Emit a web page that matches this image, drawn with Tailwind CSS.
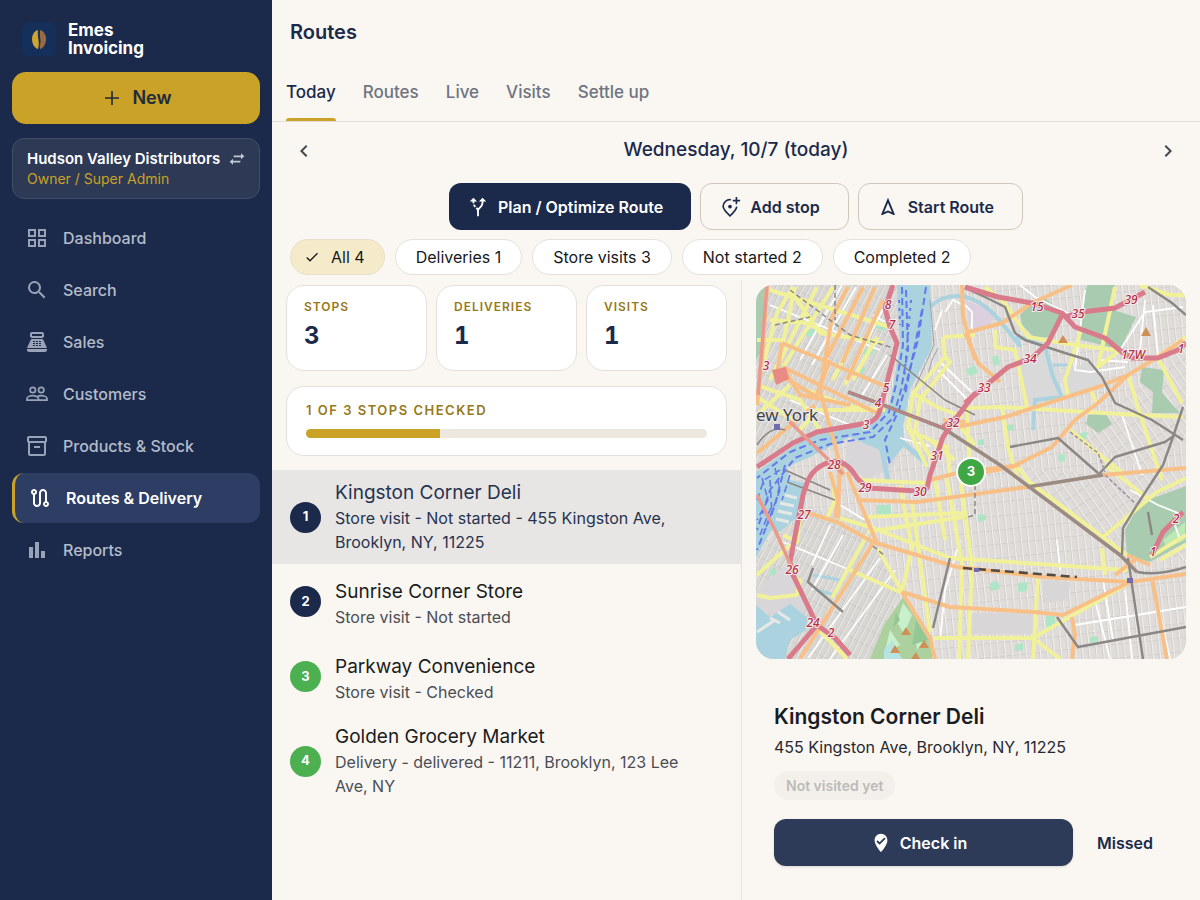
<!DOCTYPE html>
<html lang="en">
<head>
  <meta charset="UTF-8">
  <meta name="viewport" content="width=device-width, initial-scale=1.0">
  <title>Routes - Emes Invoicing</title>
  <script src="https://cdn.jsdelivr.net/npm/@tailwindcss/browser@4"></script>
</head>
<body class="flex min-h-screen bg-[#faf7f2] font-[Inter,sans-serif] text-[#1b2a4a]">

  <!-- SIDEBAR -->
  <aside class="flex w-[272px] shrink-0 flex-col bg-[#1b2a4a] px-3 pt-5">
    <div class="flex h-[38px] items-center gap-3 px-[10px]">
      <svg class="h-[34px] w-[34px]" viewBox="0 0 34 34" aria-hidden="true">
        <rect width="34" height="34" rx="6" fill="#132f5a"/>
        <path d="M16 8c-4 1-6 5-6 9s2 9 6 10c1-3 1-6 .5-9S15.500 11 16 8z" fill="#cfa52e"/>
        <path d="M18 8c4 1 6 5 6 9s-2 9-6 10c-1-3 1-6 .5-9S17.500 11 18 8z" fill="#9a6a42"/>
      </svg>
      <p class="text-[17px] leading-[18px] font-bold text-white">Emes<br>Invoicing</p>
    </div>

    <button class="mt-[14px] flex h-[52px] items-center justify-center gap-2 rounded-[14px] bg-[#c9a227] text-lg font-semibold text-[#1f2a3c]" type="button">
      <svg class="h-6 w-6" viewBox="0 0 24 24" fill="none" stroke="currentColor" stroke-width="1.600" aria-hidden="true"><path d="M12 5v14M5 12h14"/></svg>
      New
    </button>

    <button class="mt-[14px] flex h-[61px] items-center justify-between rounded-xl border border-[#424e69] bg-[#2d3955] px-[14px] text-left" type="button">
      <span class="flex flex-col">
        <span class="text-[15px] leading-5 font-semibold text-white">Hudson Valley Distributors</span>
        <span class="text-sm leading-5 text-[#c9a227]">Owner / Super Admin</span>
      </span>
      <svg class="mb-5 h-4 w-4 text-[#c3c9d6]" viewBox="0 0 24 24" fill="currentColor" aria-hidden="true"><path d="M23 8l-5-4.500v3.200H7v2.600h11v3.200zM1 16l5 4.500v-3.200h11v-2.600H6v-3.200z"/></svg>
    </button>

    <nav class="mt-[14px] flex flex-col gap-[2px] text-base font-medium text-[#b4bccb]">
      <a class="flex h-[50px] items-center gap-[14px] px-[13px]" href="#">
        <svg class="h-6 w-6 text-[#99a3b8]" viewBox="0 0 24 24" fill="currentColor" aria-hidden="true"><path d="M3 3v8h8V3H3zm6 6H5V5h4v4zm-6 4v8h8v-8H3zm6 6H5v-4h4v4zm4-16v8h8V3h-8zm6 6h-4V5h4v4zm-6 4v8h8v-8h-8zm6 6h-4v-4h4v4z"/></svg>
        Dashboard
      </a>
      <a class="flex h-[50px] items-center gap-[14px] px-[13px]" href="#">
        <svg class="h-6 w-6 text-[#99a3b8]" viewBox="0 0 24 24" fill="currentColor" aria-hidden="true"><path d="M15.500 14h-.79l-.28-.27A6.471 6.471 0 0 0 16 9.500 6.500 6.500 0 1 0 9.500 16c1.610 0 3.090-.59 4.230-1.570l.27.28v.79l5 4.990L20.490 19l-4.990-5zm-6 0C7.010 14 5 11.990 5 9.500S7.010 5 9.500 5 14 7.010 14 9.500 11.990 14 9.500 14z"/></svg>
        Search
      </a>
      <a class="flex h-[50px] items-center gap-[14px] px-[13px]" href="#">
        <svg class="h-6 w-6 text-[#99a3b8]" viewBox="0 0 24 24" fill="currentColor" fill-rule="evenodd" aria-hidden="true"><path d="M17 2H7c-1.100 0-2 .9-2 2v2c0 1.100.9 2 2 2h10c1.100 0 2-.9 2-2V4c0-1.100-.9-2-2-2zm0 4H7V4h10v2zm3 16H4c-1.100 0-2-.9-2-2v-1h20v1c0 1.100-.9 2-2 2zm-1.470-11.810A2 2 0 0 0 16.700 9H7.300c-.79 0-1.510.47-1.830 1.190L2 18h20l-3.470-7.810zM8 11h2v1H8zm3 0h2v1h-2zm3 0h2v1h-2zM8 13h2v1H8zm3 0h2v1h-2zm3 0h2v1h-2zM8 15h2v1H8zm3 0h2v1h-2zm3 0h2v1h-2z"/></svg>
        Sales
      </a>
      <a class="flex h-[50px] items-center gap-[14px] px-[13px]" href="#">
        <svg class="h-6 w-6 text-[#99a3b8]" viewBox="0 0 24 24" fill="none" stroke="currentColor" stroke-width="1.700" aria-hidden="true"><circle cx="7.800" cy="8" r="2.700"/><circle cx="16.200" cy="8" r="2.700"/><path d="M2 18.200h20v-1.500c0-1.900-3.200-3-5.800-3-1.500 0-3 .4-4.200 1-1.200-.6-2.700-1-4.200-1-2.600 0-5.800 1.100-5.800 3zM13.500 18v-1.400c0-.8-.6-1.400-1.500-1.900"/></svg>
        Customers
      </a>
      <a class="flex h-[50px] items-center gap-[14px] px-[13px]" href="#">
        <svg class="h-6 w-6 text-[#99a3b8]" viewBox="0 0 24 24" fill="currentColor" aria-hidden="true"><path d="M20 2H4c-1 0-2 .9-2 2v3.010c0 .72.43 1.340 1 1.690V20c0 1.100 1.100 2 2 2h14c.9 0 2-.9 2-2V8.700c.57-.35 1-.97 1-1.690V4c0-1.100-1-2-2-2zm-1 18H5V9h14v11zm1-13H4V4h16v3zM9 12h6v2H9z"/></svg>
        Products &amp; Stock
      </a>
      <a class="flex h-[50px] items-center gap-[14px] rounded-xl border-l-3 border-[#c9a227] bg-[#2d3d63] px-[13px] font-semibold text-white" href="#" aria-current="page">
        <svg class="h-6 w-6" viewBox="0 0 24 24" fill="currentColor" aria-hidden="true"><path d="M19 15.180V7c0-2.210-1.790-4-4-4s-4 1.790-4 4v10c0 1.100-.9 2-2 2s-2-.9-2-2V8.820C8.160 8.400 9 7.300 9 6c0-1.660-1.340-3-3-3S3 4.340 3 6c0 1.300.84 2.400 2 2.820V17c0 2.210 1.790 4 4 4s4-1.790 4-4V7c0-1.100.9-2 2-2s2 .9 2 2v8.180A2.996 2.996 0 0 0 18 21c1.660 0 3-1.340 3-3 0-1.300-.84-2.400-2-2.820zM6 7c-.55 0-1-.45-1-1s.45-1 1-1 1 .45 1 1-.45 1-1 1zm12 12c-.55 0-1-.45-1-1s.45-1 1-1 1 .45 1 1-.45 1-1 1z"/></svg>
        Routes &amp; Delivery
      </a>
      <a class="flex h-[50px] items-center gap-[14px] px-[13px]" href="#">
        <svg class="h-6 w-6 text-[#99a3b8]" viewBox="0 0 24 24" fill="currentColor" aria-hidden="true"><path d="M4 9h4v11H4zm12 4h4v7h-4zm-6-9h4v16h-4z"/></svg>
        Reports
      </a>
    </nav>
  </aside>

  <!-- MAIN -->
  <main class="flex min-w-0 flex-1 flex-col">
    <header class="flex h-16 items-center px-[18px]">
      <h1 class="text-xl font-semibold">Routes</h1>
    </header>

    <div class="flex h-[58px] gap-[27px] border-b border-[#dfdcd9] px-[14px] text-[17px] font-medium text-[#6f7480]" role="tablist">
      <button class="relative text-[#1b2a4a]" type="button" role="tab" aria-selected="true">Today<span class="absolute inset-x-0 bottom-0 h-[3px] rounded-t-[3px] bg-[#c9a227]"></span></button>
      <button type="button" role="tab">Routes</button>
      <button type="button" role="tab">Live</button>
      <button type="button" role="tab">Visits</button>
      <button type="button" role="tab">Settle up</button>
    </div>

    <div class="flex h-[57px] items-center justify-between px-5 text-[#43474e]">
      <button type="button" aria-label="Previous day"><svg class="h-6 w-6" viewBox="0 0 24 24" fill="currentColor" aria-hidden="true"><path d="M15.410 7.410L14 6l-6 6 6 6 1.410-1.410L10.830 12z"/></svg></button>
      <h2 class="text-[19px] font-medium text-[#1b2a4a]">Wednesday, 10/7 (today)</h2>
      <button type="button" aria-label="Next day"><svg class="h-6 w-6" viewBox="0 0 24 24" fill="currentColor" aria-hidden="true"><path d="M10 6L8.590 7.410 13.170 12l-4.580 4.590L10 18l6-6z"/></svg></button>
    </div>

    <div class="mt-1 flex justify-center gap-[9px] text-base font-semibold">
      <button class="flex h-[47px] items-center gap-[9px] rounded-xl bg-[#1b2a4a] pr-7 pl-[18px] text-white" type="button">
        <svg class="h-[22px] w-[22px]" viewBox="0 0 24 24" fill="currentColor" aria-hidden="true"><path d="M9.780 11.160l-1.420 1.420a7.282 7.282 0 0 1-1.790-2.940l1.940-.49c.32.89.77 1.500 1.270 2.010zM11 6L7 2 3 6h3.020c.02.81.08 1.540.19 2.170l1.940-.49C8.080 7.200 8.030 6.630 8.020 6H11zm10 0l-4-4-4 4h2.990c-.1 3.680-1.280 4.750-2.540 5.880-.5.44-1.010.92-1.450 1.550-.34-.49-.73-.88-1.130-1.240L9.460 13.600c.93.85 1.540 1.540 1.540 3.400v5h2v-5c0-2.020.71-2.660 1.790-3.630 1.380-1.240 3.080-2.780 3.200-7.370H21z"/></svg>
        Plan / Optimize Route
      </button>
      <button class="flex h-[47px] items-center gap-[9px] rounded-xl border border-[#cfc8ba] pr-7 pl-[18px]" type="button">
        <svg class="h-[22px] w-[22px]" viewBox="0 0 24 24" fill="none" stroke="currentColor" stroke-width="1.800" aria-hidden="true"><path d="M13 4.100C8.500 3.500 4.500 6.800 4.500 11.200c0 2.700 2.500 5.900 7.500 10.400 4.500-4 7-7.200 7.400-10M19 1v8M15 5h8"/><circle cx="12" cy="11.500" r="2" fill="currentColor" stroke="none"/></svg>
        Add stop
      </button>
      <button class="flex h-[47px] items-center gap-[9px] rounded-xl border border-[#cfc8ba] pr-7 pl-[18px]" type="button">
        <svg class="h-[22px] w-[22px]" viewBox="0 0 24 24" fill="currentColor" aria-hidden="true"><path d="M12 7.270l4.280 10.430-3.470-1.530-.81-.36-.81.36-3.470 1.530L12 7.270M12 2L4.500 20.290l.71.71L12 18l6.790 3 .71-.71L12 2z"/></svg>
        Start Route
      </button>
    </div>

    <div class="mt-[9px] flex gap-[10px] px-[18px] text-base text-[#16181d]">
      <button class="flex h-9 items-center gap-[10px] rounded-full border border-[#e6dfc9] bg-[#f5ebcb] pr-[19px] pl-3" type="button" aria-pressed="true">
        <svg class="h-4 w-[18px]" viewBox="0 0 24 24" fill="currentColor" aria-hidden="true"><path d="M9 16.170L4.830 12l-1.420 1.410L9 19 21 7l-1.410-1.410z"/></svg>
        All 4
      </button>
      <button class="h-9 rounded-full border border-[#e5e1da] bg-white px-5" type="button">Deliveries 1</button>
      <button class="h-9 rounded-full border border-[#e5e1da] bg-white px-5" type="button">Store visits 3</button>
      <button class="h-9 rounded-full border border-[#e5e1da] bg-white px-5" type="button">Not started 2</button>
      <button class="h-9 rounded-full border border-[#e5e1da] bg-white px-5" type="button">Completed 2</button>
    </div>

    <div class="mt-[5px] flex flex-1">
      <!-- STOPS -->
      <section class="min-w-0 flex-1 border-r border-[#e5e3e0] pt-[5px]">
        <div class="grid grid-cols-3 gap-[9px] px-[14px] text-[#96791a]">
          <div class="h-[86px] rounded-[18px] border border-[#e5e1da] bg-white px-[17px] pt-3">
            <p class="text-xs leading-[18px] font-semibold tracking-[1px]">STOPS</p>
            <p class="mt-1 text-2xl font-bold text-[#1b2a4a] tabular-nums">3</p>
          </div>
          <div class="h-[86px] rounded-[18px] border border-[#e5e1da] bg-white px-[17px] pt-3">
            <p class="text-xs leading-[18px] font-semibold tracking-[1px]">DELIVERIES</p>
            <p class="mt-1 text-2xl font-bold text-[#1b2a4a] tabular-nums">1</p>
          </div>
          <div class="h-[86px] rounded-[18px] border border-[#e5e1da] bg-white px-[17px] pt-3">
            <p class="text-xs leading-[18px] font-semibold tracking-[1px]">VISITS</p>
            <p class="mt-1 text-2xl font-bold text-[#1b2a4a] tabular-nums">1</p>
          </div>
        </div>

        <div class="mx-[14px] mt-[15px] h-[70px] rounded-[18px] border border-[#e5e1da] bg-white px-[19px] pt-[14px]">
          <p class="text-[13px] leading-[18px] font-semibold tracking-[1.5px] text-[#96791a]">1 OF 3 STOPS CHECKED</p>
          <div class="mt-[10px] h-[9px] overflow-hidden rounded-full bg-[#ece8df]">
            <div class="h-full bg-[#c9a227]" style="width: 33.300%"></div>
          </div>
        </div>

        <ul class="mt-[14px]">
          <li class="flex min-h-[94px] items-center gap-[14px] bg-[#e8e6e4] pr-9 pl-[18px]">
            <span class="flex h-[31px] w-[31px] shrink-0 items-center justify-center rounded-full bg-[#1b2a4a] text-[13px] font-bold text-white">1</span>
            <div>
              <h3 class="text-[19px] leading-[26px] text-[#26334f]">Kingston Corner Deli</h3>
              <p class="text-base leading-6 text-[#26334f]">Store visit - Not started - 455 Kingston Ave, Brooklyn, NY, 11225</p>
            </div>
          </li>
          <li class="flex min-h-[75px] items-center gap-[14px] pr-9 pl-[18px]">
            <span class="flex h-[31px] w-[31px] shrink-0 items-center justify-center rounded-full bg-[#1b2a4a] text-[13px] font-bold text-white">2</span>
            <div class="pt-1">
              <h3 class="text-[19px] leading-[26px] text-[#1a1c20]">Sunrise Corner Store</h3>
              <p class="text-base leading-6 text-[#4a4d54]">Store visit - Not started</p>
            </div>
          </li>
          <li class="flex min-h-[75px] items-center gap-[14px] pr-9 pl-[18px]">
            <span class="flex h-[31px] w-[31px] shrink-0 items-center justify-center rounded-full bg-[#4caf50] text-[13px] font-bold text-white">3</span>
            <div class="pt-1">
              <h3 class="text-[19px] leading-[26px] text-[#1a1c20]">Parkway Convenience</h3>
              <p class="text-base leading-6 text-[#4a4d54]">Store visit - Checked</p>
            </div>
          </li>
          <li class="flex min-h-[94px] items-center gap-[14px] pr-9 pl-[18px]">
            <span class="flex h-[31px] w-[31px] shrink-0 items-center justify-center rounded-full bg-[#4caf50] text-[13px] font-bold text-white">4</span>
            <div>
              <h3 class="text-[19px] leading-[26px] text-[#1a1c20]">Golden Grocery Market</h3>
              <p class="text-base leading-6 text-[#4a4d54]">Delivery - delivered - 11211, Brooklyn, 123 Lee Ave, NY</p>
            </div>
          </li>
        </ul>
      </section>

      <!-- MAP + STOP DETAILS -->
      <section class="w-[458px] shrink-0 px-[14px] pt-[5px]">
        <div class="relative h-[374px] overflow-hidden rounded-[18px] bg-[#dddbd8]">
          <svg class="h-full w-full" viewBox="756 285 430 374" preserveAspectRatio="xMidYMid slice" role="img" aria-label="Map of Brooklyn">
            <defs>
              <pattern id="blocks" width="7" height="14" patternUnits="userSpaceOnUse" patternTransform="rotate(-6)">
                <rect width="7" height="14" fill="#dfdcd9"/>
                <path d="M0 0H7M0 0V14" stroke="#f4f1ef" stroke-width="1.800"/>
                <path d="M1 1H7V14" fill="none" stroke="#bbb7b4" stroke-width=".7"/>
              </pattern>
              <pattern id="blocks-west" width="6" height="15" patternUnits="userSpaceOnUse" patternTransform="rotate(27)">
                <rect width="6" height="15" fill="#d9d7d4"/>
                <path d="M0 0H6M0 0V15" stroke="#f1efed" stroke-width="1.500"/>
                <path d="M1 1H6V15" fill="none" stroke="#b4b1ae" stroke-width=".7"/>
              </pattern>
              <pattern id="blocks-east" width="8" height="12" patternUnits="userSpaceOnUse" patternTransform="rotate(-35)">
                <rect width="8" height="12" fill="#dedbd8"/>
                <path d="M0 0H8M0 0V12" stroke="#f4f1ef" stroke-width="1.700"/>
                <path d="M1 1H8V12" fill="none" stroke="#bbb7b4" stroke-width=".7"/>
              </pattern>
            </defs>

            <!-- street blocks -->
            <rect x="756" y="285" width="430" height="374" fill="url(#blocks)"/>
            <path d="M756 285H900L885 400 867 423 807 437 756 470z" fill="url(#blocks-west)"/>
            <path d="M790 505L865 520 900 592 870 659H756V560z" fill="url(#blocks-west)"/>
            <path d="M1000 465L1103 475 1186 468V560L1127 555z" fill="url(#blocks-east)"/>
            <path d="M1080 440L1186 345V440L1150 470z" fill="url(#blocks-east)"/>
            <path d="M1018 362L1046 352 1062 375 1060 395 1027 407zM1062 372L1090 362 1106 384 1070 400z" fill="#dad9da"/>
            <path d="M965 300L995 312 990 327 972 330z" fill="#dccfdf"/>
            <path d="M756 590L785 565 808 600 800 620 756 610zM848 440H895V465L868 480 845 462z" fill="#d8d6d8"/>
            <path d="M972 613H1033V634H972zM1043 580L1070 582 1068 600 1043 603z" fill="#d8d6d6"/>

            <!-- parks -->
            <g fill="#a9ccb0">
              <path d="M1020 315L1030 305 1045 298 1062 312 1050 337 1035 338 1022 325z"/>
              <path d="M1087 285H1115L1110 309 1136 317 1120 350 1098 344 1081 340 1080 317z"/>
              <path d="M1142 367L1164 370 1162 393 1180 413H1152L1153 392 1140 382z"/>
              <path d="M1088 415L1105 413 1112 424 1098 433 1086 424z"/>
              <path d="M1140 503L1186 486V542L1150 562 1127 555 1125 530z"/>
              <path d="M756 285H766L762 350 756 360z"/>
            </g>
            <path d="M903 597L932 638V659H870L884 625z" fill="#add19e"/>
            <path d="M903 603L912 615 904 634 897 622zM890 630L900 645 884 655zM915 632L923 642 917 650z" fill="#c8f0cc"/>
            <path d="M916 620L928 640 912 645zM896 612L900 620 893 628z" fill="#93c794"/>
            <path d="M884 650L892 640 902 659H884z" fill="#b5e3e4"/>
            <path d="M1163 540L1185 522V540L1167 548z" fill="#bce8b4"/>
            <g fill="#aee5c6">
              <path d="M877 505h14v10h-14zM990 583l8-2 2 8-9 2zM1018 583l9-1v9l-9 1zM1046 616h9v11h-9zM803 330l11-1 2 6-9 2zM992 357l6-2 2 9-6 2zM1058 455l7-1v7l-6 1zM978 440l6-1v6h-6zM770 570l6-3v7l-6 2zM1090 637l8-1v6l-8 1zM1015 645l8-2v7l-8 1zM978 515l8-1v6l-8 2zM862 352l9-6 4 5-8 8zM858 370l8-4-3 10h-8zM877 322l10-1-2 10-10-3zM965 370l10-5 3 8-8 3zM1007 425l7-1v6l-7 1zM1080 433l8-1-2 7-5 1z"/>
            </g>

            <!-- water -->
            <path d="M897 285H930L932 347 910 390 903 427 905 445 890 463 880 450 850 437 810 457 787 467 793 495 785 520 770 532 756 558V472L807 437 867 424 890 403 900 347z" fill="#aad3df"/>
            <path d="M756 605L770 617 790 604 808 618 806 630 790 640 785 659H756z" fill="#aad3df"/>
            <path d="M778 478L806 483 804 510 794 520 777 534 770 525z" fill="#aad3df"/>
            <g fill="none" stroke="#aad3df" stroke-width="4">
              <path d="M930 307Q945 293 965 297T1005 327 1018 342 1045 347L1053 377 1062 397 1035 400 1033 430"/>
              <path d="M1053 365H1068M813 575L840 580 835 595 815 590" stroke-width="3"/>
              <path d="M880 440L888 480M900 440L925 462" stroke-width="5"/>
            </g>
            <path d="M780 503l14 3M778 511l14 3M776 519l13 3M785 495l12 3M770 618l10 5M778 612l12 8M757 632l18-12" stroke="#e7e8e6" stroke-width="3"/>
            <path d="M938 348l-6 12-6 22M930 300l4 45-20 45" fill="none" stroke="#9aa4ad" stroke-width="1"/>

            <!-- ferry lanes -->
            <g fill="none" stroke="#6479ea" stroke-width="2" stroke-dasharray="7 4">
              <path d="M902 287L903 345 896 385 889 412 870 432 820 440 790 452 757 478"/>
              <path d="M906 290L908 350 901 390 893 418 873 437 830 444 795 458 770 490 757 530"/>
              <path d="M926 287L918 340 907 380 899 410 885 440 890 465"/>
              <path d="M922 310L913 355 905 395M785 465L775 505 757 550"/>
              <path d="M762 478L768 500 757 520M775 468L780 490 765 530M790 475L782 500M757 500L764 480 780 470M770 480L772 515M760 535L772 505" stroke-width="1.600"/>
              <path d="M899 300L900 325M911 300L904 380" stroke-dasharray="3 5"/>
            </g>

            <!-- white streets -->
            <g fill="none" stroke="#fff" stroke-width="1.800">
              <path d="M873 315L885 322M856 287L812 365M887 355L862 395M895 285L850 375M842 285L800 360M770 305L880 350M790 400L850 425"/>
              <path d="M940 362L975 395M938 370L970 402M945 312L953 300 963 305M935 330L942 310M900 438L930 446M965 305L972 312V330"/>
              <path d="M1020 285L1035 297 1082 320M1085 290L1075 370 1090 372 1125 367M1145 300L1140 350M1120 350L1145 312 1183 307M1153 305L1158 355M1098 360L1128 362"/>
              <path d="M1122 415L1142 475M1130 490L1158 505 1183 515M1175 525L1180 540"/>
              <path d="M783 542L850 570M840 505L865 520M830 525L812 565M960 540L945 590 940 640M880 558L808 658M895 570L830 659M1103 580L1113 640M1057 540L1060 570M843 535L812 590M1075 625L1186 607M1158 605L1170 659M1095 600L1110 659M1125 590L1132 659"/>
            </g>

            <!-- yellow roads -->
            <g fill="none" stroke="#f1f199" stroke-width="4" stroke-linejoin="round">
              <path d="M793 287L777 313 763 365M817 287L770 380M833 287L783 367M790 290L820 333 883 343M770 320L807 323 830 335M757 340H783M807 390L850 407 885 410M757 397L793 420M850 347L833 380M877 337L853 380M800 430L817 410 880 410M770 290L890 327M757 415L790 385M795 287L783 343M870 330L845 385M757 385L800 400 820 430"/>
              <path d="M943 337L945 357 913 393 908 427 927 467M913 393L937 407 963 417M908 430L947 447 950 475M943 337L975 335M945 357L950 362 920 400 915 430 935 465M930 440L955 460M955 420L975 445"/>
              <path d="M995 330V347L1015 350 1027 407M965 408L1002 407 1138 415 1183 417M1002 407L1008 447 1018 480M1115 287L1098 367 1120 350M1082 327L1065 380 1068 397M1158 358L1182 403M1128 375L1142 420 1162 480M967 408L970 475M985 287L1005 303 1028 337 1075 345 1115 350M1090 388L1096 402M1070 430L1100 455 1125 475M1158 357L1186 337M1140 285L1170 295H1186"/>
              <path d="M1017 465L1027 480 1103 537 1127 555M1103 537L1157 492 1186 478M865 517L963 513M867 532L963 517M840 518L873 528 950 558 1127 570M900 485L912 548 902 592M912 502L930 632M935 480L945 540M947 478L962 565 959 659M960 475L972 565 968 659M867 535L832 598M850 570L902 593M878 548L902 592M1038 575L1033 659M933 638H1033L1127 584M1033 638L1060 659M1102 548L1105 575M858 480L925 483M783 535L797 542 800 515M757 575L790 545M757 595L770 598 797 595 800 578M817 628L847 659M1105 465L1150 500M832 475L835 500 827 518M1025 638H1000M1150 557L1186 535M1160 560L1186 545"/>
            </g>

            <!-- orange roads -->
            <g fill="none" stroke="#f8c087" stroke-width="4" stroke-linejoin="round">
              <path d="M848 287L832 317 820 390 843 475M863 287L827 357M875 287L842 363M883 300L847 380M782 343L887 387M783 367L877 413M782 343L777 373 817 397M767 285L762 360 757 405M830 360L815 400M757 453L815 405M783 367L800 395 850 405"/>
              <path d="M962 285L963 317 975 360M965 333L1002 323 1032 303 1072 285M965 333L978 363 1000 382M957 427L1005 417 1098 387 1128 375M970 475L1012 467 1052 447 1075 420 1098 403 1128 375 1158 357 1183 340M943 420L965 422"/>
              <path d="M805 512L837 522 873 542 910 553 957 567 1043 577 1130 582 1186 574M857 500L917 502 1027 487M930 480L957 473 1020 465M1103 475L1186 468M873 543L817 632 800 659M902 592L950 607 1033 612 1063 615 1130 582M847 472L865 515 877 543M902 592L930 638 935 659M1072 617L1075 635 1072 659M1152 578L1167 659M830 472L838 500 835 518M840 462L838 518M1137 558L1115 575M1127 555L1150 565"/>
            </g>

            <!-- railways and bridges -->
            <g fill="none" stroke="#8b8785" stroke-width="2.400" stroke-linejoin="round">
              <path d="M965 288L985 297 1005 307 1015 333 1025 340 1065 353 1088 360 1102 377 1115 403 1152 420 1183 440M1148 287L1172 303 1186 315M1183 407L1173 437 1163 465 1137 505 1123 528 1122 555M1098 475L1115 457 1165 442 1175 435M1010 447L1058 438 1098 473M1128 558L1143 659M1057 617L1078 647 1186 627M950 558L933 628M813 568L808 582 843 612M1137 572Q1160 576 1186 567M1148 512L1152 535"/>
              <path d="M785 470L830 490M787 482L835 500M757 445Q770 425 785 430M890 355L945 400 975 415" stroke-width="1.600"/>
              <path d="M790 290L850 335 900 350M775 325L810 317M835 285V320M975 485V515L965 518M873 546L885 556" stroke-width="1.500" stroke-dasharray="5 3"/>
              <path d="M1070 432L1098 453 1105 472M1105 475L1137 505" stroke="#a294a8" stroke-width="1.600" stroke-dasharray="4 2"/>
              <path d="M848 392L878 403 943 428 1000 465 1120 555 1137 572M1027 487L1103 475" stroke="#9c8b82" stroke-width="3.600"/>
              <path d="M963 568L1077 577" stroke="#544c42" stroke-width="2.600" stroke-dasharray="9 5"/>
            </g>

            <!-- highways -->
            <g fill="none" stroke="#da7b8b" stroke-width="5" stroke-linejoin="round">
              <path d="M893 285L885 308 890 327 897 343 892 363 885 390 880 410 Q877 421 867 423L817 432 793 443 757 467"/>
              <path d="M965 287L998 297 1032 303 1062 313 1075 327 1105 338 1122 352 1132 358 1158 358 1178 350 1186 343M1062 315L1048 343 1032 358 1008 367 965 403M1065 317L1082 312 1115 308 1145 292"/>
              <path d="M975 393L957 417 943 437 930 475 927 488 917 491 867 488 857 478 Q845 458 830 462T808 480L803 495 790 562 793 575 817 625 788 659M957 417L943 427M817 625L835 638 850 655M1152 555L1163 532 1183 512"/>
              <path d="M788 420L843 474M767 285L758 395M757 495L775 530 793 570" stroke="#ea9a8c" stroke-width="3.500"/>
              <path d="M848 392L943 428" stroke-width="1"/>
            </g>
            <path d="M772 370l14-3 3 12-13 6z" fill="#e88b84"/>

            <!-- hills and stations -->
            <path d="M1063 335l5 8h-10zM1146 327l5 9h-10zM906 627l5 8h-10zM895 645l5 8h-10zM924 640l5 8h-10zM916 652l4 7h-9z" fill="#d08f55"/>
            <path d="M774 424h6v6h-6zM974 568h5v4h-5zM1127 578h6v5h-6z" fill="#6d6db0"/>

            <!-- route numbers -->
            <g class="font-['Noto_Sans']" font-size="12" font-style="italic" font-weight="500" fill="#ad2f4a" stroke="#f7ecec" stroke-width="2" paint-order="stroke" text-anchor="middle">
              <text x="888" y="309">8</text><text x="892" y="329">7</text><text x="766" y="370">3</text>
              <text x="886" y="392">5</text><text x="878" y="407">4</text><text x="866" y="429">3</text>
              <text x="953" y="427">32</text><text x="937" y="460">31</text><text x="834" y="469">28</text>
              <text x="984" y="392">33</text><text x="1030" y="363">34</text><text x="1037" y="311">15</text>
              <text x="1078" y="318">35</text><text x="1131" y="304">39</text><text x="1133" y="359">17W</text>
              <text x="1181" y="353">1</text><text x="865" y="492">29</text><text x="920" y="496">30</text>
              <text x="804" y="519">27</text><text x="792" y="574">26</text><text x="813" y="627">24</text>
              <text x="831" y="637">2</text><text x="1176" y="523">2</text><text x="1153" y="556">1</text>
            </g>
            <text class="font-['Noto_Sans']" x="756" y="421" font-size="17" fill="#444" stroke="#eceaea" stroke-width="2" paint-order="stroke">ew York</text>
          </svg>
          <span class="absolute top-[172px] left-[200px] flex h-[30px] w-[30px] items-center justify-center rounded-full border-2 border-white bg-[#3fa845] text-[13px] font-bold text-white">3</span>
        </div>

        <div class="px-[18px] pt-[42px]">
          <h2 class="text-[21px] leading-8 font-semibold text-[#1a1c24]">Kingston Corner Deli</h2>
          <p class="text-base leading-7 text-[#26282e]">455 Kingston Ave, Brooklyn, NY, 11225</p>
          <p class="mt-[10px] inline-flex h-[29px] items-center rounded-full bg-[#f3f0ec] px-3 text-sm font-semibold text-[#bdbbb8]">Not visited yet</p>
          <div class="mt-[19px] flex items-center">
            <button class="flex h-[47px] flex-1 items-center justify-center gap-2 rounded-xl bg-[#2d3a58] pr-[10px] text-base font-semibold text-white shadow-sm" type="button">
              <svg class="h-[22px] w-[22px]" viewBox="0 0 24 24" fill="currentColor" aria-hidden="true"><path d="M12 2C8.140 2 5 5.140 5 9c0 5.250 7 13 7 13s7-7.750 7-13c0-3.860-3.140-7-7-7zm-1.530 12l-3.480-3.480 1.410-1.410 2.070 2.060 5.130-5.130 1.410 1.420L10.470 14z"/></svg>
              Check in
            </button>
            <button class="h-[47px] pr-[15px] pl-6 text-base font-semibold" type="button">Missed</button>
          </div>
        </div>
      </section>
    </div>
  </main>
</body>
</html>
